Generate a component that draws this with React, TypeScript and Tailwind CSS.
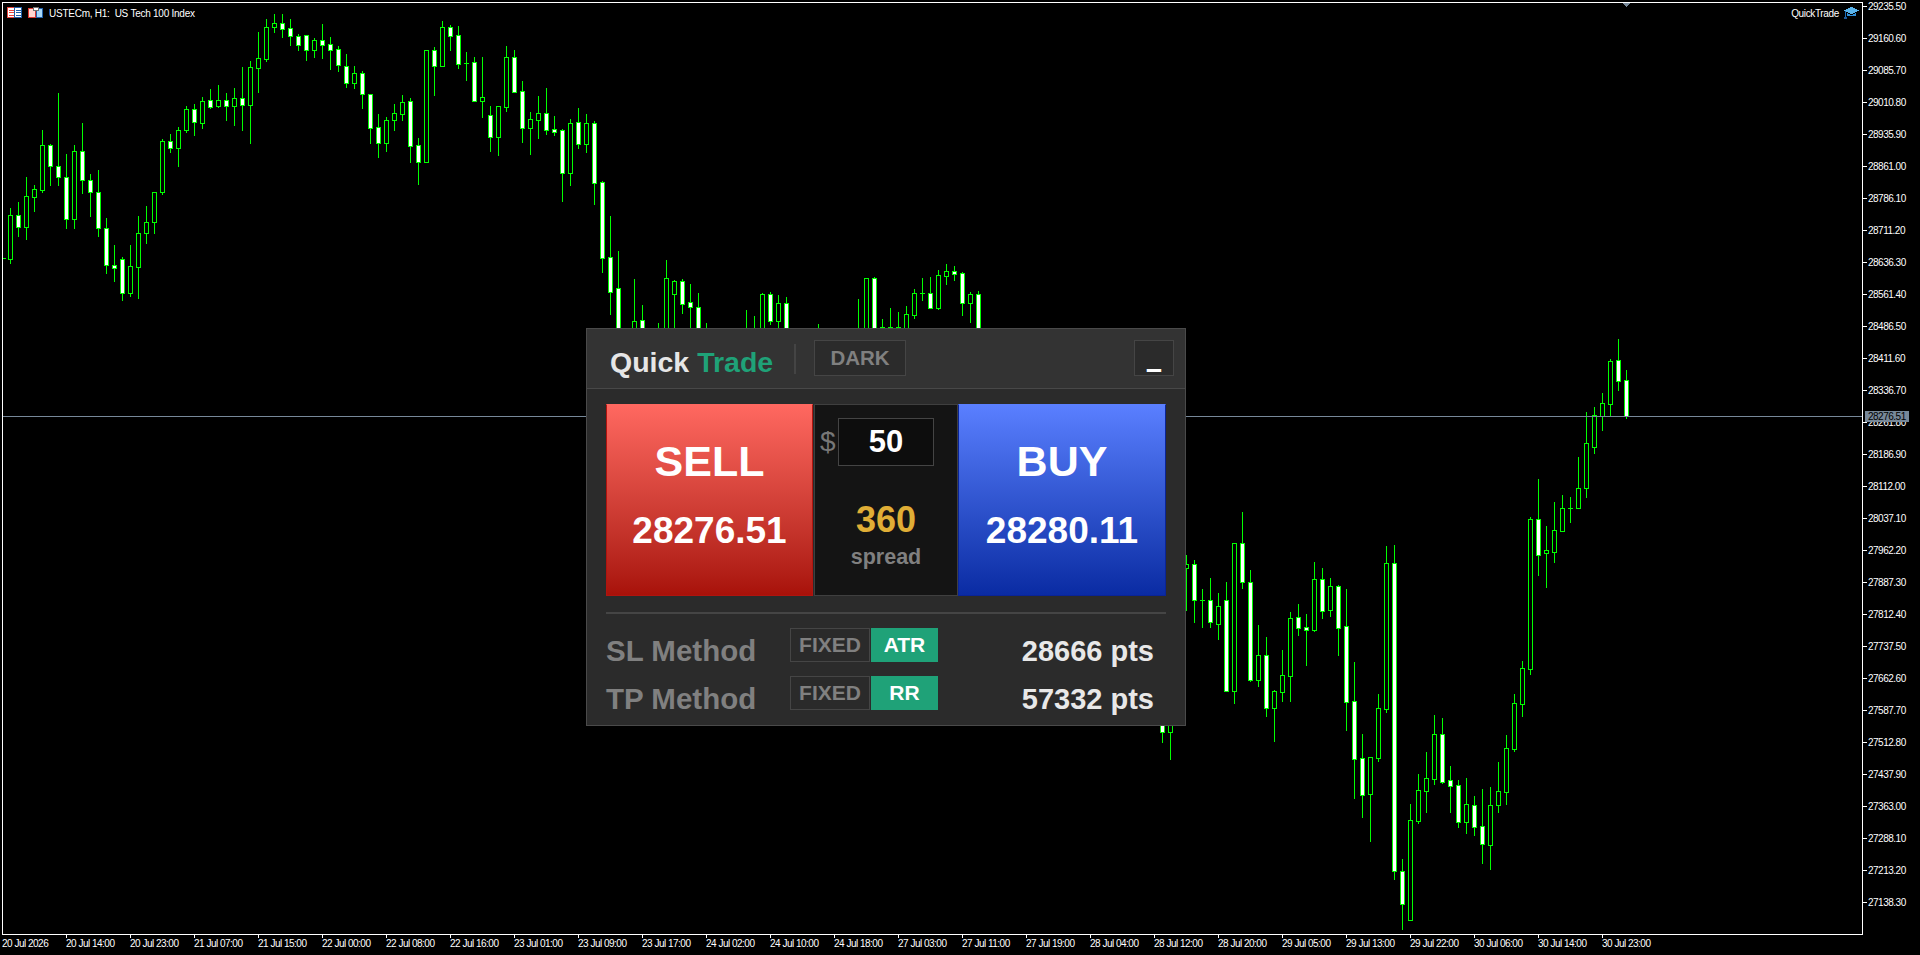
import React from "react";

type Row = number[];
// each group: y offset, zoom divisor, rows. Row: cx, high, bodyTop, bodyBottom, low, filled (1) / hollow (0); wick-only rows have 3 entries
const groups: [number, number, Row[]][] = [
  [0, 3, [
    [10,625,646,778,788,0],[18,606,646,682,707,1],[26,532,589,682,716,0],[34,555,568,590,633,0],[42,390,436,569,575,0],
    [50,433,436,499,555,1],[58,279,499,532,555,1],[66,462,532,658,684,1],[74,435,454,658,684,0],[82,369,454,541,578,1],
    [90,522,541,577,648,1],[98,510,577,685,708,1],[106,655,685,796,819,1],[114,736,796,805,843,1],[122,771,778,880,900,1],
    [130,736,799,880,888,0],[138,648,700,802,894,0],[146,618,667,700,729,0],[154,575,577,667,699,0],[162,418,424,575,581,0],
    [170,403,424,445,456,1],[178,381,391,445,498,0],[186,319,328,391,396,0],[194,312,328,367,405,1],[202,292,304,368,384,0],
    [210,267,301,320,324,1],[218,255,301,319,320,0],[226,279,301,319,360,1],[234,264,295,317,375,0],[242,201,295,314,390,1],
    [250,183,202,314,429,0],[258,96,175,205,276,0],[266,57,82,176,183,0],[274,42,70,82,96,0],[282,42,70,88,111,1],
    [290,57,85,109,135,1],[298,102,109,136,150,1],[306,106,106,151,180,1],[314,114,121,151,171,0],[322,72,121,134,174,1],
    [330,111,133,149,207,1],[338,139,148,196,213,1],[346,163,199,250,261,1],[354,198,220,248,264,0],[362,214,220,283,324,1],
    [370,283,283,385,429,1],[378,343,382,430,471,1],[386,352,361,430,453,0],[394,312,340,361,390,0],
  ]],
  [10, 3, [
    [402,255,277,311,330,0],[410,264,274,407,456,1],[418,384,406,455,522,1],[426,121,121,455,455,0],[434,111,121,167,255,1],
    [442,33,52,167,167,0],[450,45,52,77,120,1],[458,48,76,161,174,1],[466,126,160,160,210,0],[474,141,157,272,272,1],
    [482,141,262,272,321,0],[490,289,316,380,423,1],[498,289,289,380,435,0],[506,108,142,290,303,0],[514,120,142,245,245,1],
    [522,213,244,353,396,1],[530,306,328,353,432,0],[538,258,310,329,384,0],[546,234,310,359,372,1],[554,318,358,365,375,1],
    [562,358,361,488,573,1],[570,327,340,488,525,0],[578,294,337,401,414,1],[586,312,340,401,426,0],[594,333,340,518,582,1],
    [602,514,517,743,786,1],[610,618,742,845,912,1],
  ]],
  [130, 3, [
    [618,363,475,600,600,1],[634,447,574,600,600,0],[642,525,571,600,600,1],[658,579,600],[666,390,445,600,600,0],
    [674,450,454,491,591,0],[682,447,454,521,549,1],[690,462,517,530,600,1],[698,489,532,600,600,1],[706,579,600],
    [746,540,600],[754,558,600],[762,489,493,600,600,0],[770,486,493,572,582,1],[778,495,520,572,600,0],[786,501,520,600,600,1],
    [818,582,600],[858,507,600],[866,445,445,600,600,0],[874,441,445,600,600,1],[882,567,592,592,600,0],[890,534,592,592,600,0],
    [898,546,592,592,600,0],[906,528,553,600,600,0],[914,477,490,554,564,0],[922,444,490,490,510,0],[930,441,490,533,533,1],
    [938,420,436,533,537,0],[946,402,424,437,462,0],[954,408,424,431,450,1],[962,426,430,518,555,1],[970,486,493,518,576,0],
    [978,483,493,600,600,1],
  ]],
  [500, 3, [
    [1186,165,193,205,330,0],[1194,180,193,301,366,1],[1202,267,301,301,381,0],[1210,235,301,367,381,1],[1218,279,319,371,417,0],
    [1226,247,301,574,574,1],[1234,130,130,572,609,0],[1242,36,130,247,264,1],[1250,210,247,539,543,1],[1258,375,466,539,558,0],
    [1266,411,466,625,648,1],[1274,571,574,625,723,0],
  ]],
  [520, 3, [
    [1282,390,466,515,543,0],[1290,277,295,467,543,0],[1298,252,292,323,345,1],[1306,282,322,329,435,1],[1314,126,178,329,333,0],
    [1322,144,178,272,294,1],[1330,174,199,269,288,0],[1338,195,199,323,405,1],[1346,207,319,545,630,1],[1354,426,544,716,834,1],
    [1362,642,715,824,891,1],[1370,711,712,821,963,0],[1378,522,565,713,723,0],[1386,78,130,566,576,0],[1394,75,130,1052,1077,1],
    [1402,1017,1054,1151,1227,1],[1410,852,901,1199,1199,0],[1418,762,811,902,909,0],[1426,696,775,812,876,0],[1434,585,643,776,792,0],
    [1442,594,643,785,789,1],[1450,738,781,797,876,1],[1458,780,796,905,921,1],[1466,774,853,905,939,0],[1474,828,856,920,945,1],
  ]],
  [330, 2.8, [
    [1482,1285,1390,1438,1492,1],[1490,1280,1331,1441,1509,0],[1498,1210,1292,1329,1350,0],[1506,1134,1171,1293,1327,0],
    [1514,1019,1043,1172,1179,0],[1522,927,947,1046,1081,0],[1530,524,530,948,963,0],[1538,417,530,629,686,1],[1546,549,617,625,720,0],
    [1554,482,561,621,650,0],[1562,462,499,562,562,0],[1570,468,497,497,538,0],[1578,356,441,497,497,0],[1586,230,315,441,468,0],
    [1594,216,239,327,344,0],[1602,177,205,241,280,0],[1610,81,88,206,238,0],[1618,25,85,142,168,1],[1626,112,141,242,246,1],
  ]],
  [720, 3, [
    [1162,0,0,36,66,1],[1170,0,0,37,117,0],
  ]],
];

const GREEN = "#00ff00";

function Candles() {
  const out: React.ReactNode[] = [];
  groups.forEach(([off, div, rows], g) => {
    rows.forEach((r, i) => {
      const y = (v: number) => Math.round(off + v / div);
      const cx = r[0];
      if (r.length === 3) {
        out.push(<rect key={`${g}-${i}`} x={cx} y={y(r[1])} width={1} height={y(r[2]) - y(r[1])} fill={GREEN} />);
        return;
      }
      const [, hi, top, bot, lo, f] = r;
      const t = y(top);
      const h = y(bot) - t + 1;
      out.push(
        <g key={`${g}-${i}`}>
          <rect x={cx} y={y(hi)} width={1} height={y(lo) - y(hi) + 1} fill={GREEN} />
          <rect x={cx - 2} y={t} width={5} height={h} fill={GREEN} />
          {h > 2 && <rect x={cx - 1} y={t + 1} width={3} height={h - 2} fill={f ? "#ffffff" : "#000000"} />}
        </g>
      );
    });
  });
  return <>{out}</>;
}

const prices = [
  "29235.50","29160.60","29085.70","29010.80","28935.90","28861.00","28786.10","28711.20","28636.30","28561.40",
  "28486.50","28411.60","28336.70","28261.80","28186.90","28112.00","28037.10","27962.20","27887.30","27812.40",
  "27737.50","27662.60","27587.70","27512.80","27437.90","27363.00","27288.10","27213.20","27138.30",
];
const dates = [
  "20 Jul 2026","20 Jul 14:00","20 Jul 23:00","21 Jul 07:00","21 Jul 15:00","22 Jul 00:00","22 Jul 08:00","22 Jul 16:00",
  "23 Jul 01:00","23 Jul 09:00","23 Jul 17:00","24 Jul 02:00","24 Jul 10:00","24 Jul 18:00","27 Jul 03:00","27 Jul 11:00",
  "27 Jul 19:00","28 Jul 04:00","28 Jul 12:00","28 Jul 20:00","29 Jul 05:00","29 Jul 13:00","29 Jul 22:00","30 Jul 06:00",
  "30 Jul 14:00","30 Jul 23:00",
];

function MethodRow({ label, alt, value }: { label: string; alt: string; value: string }) {
  return (
    <div className="flex items-start h-[34px] mt-[14px]">
      <div className="w-[184px] mt-[6px] leading-[34px] text-[29.5px] font-bold text-[#808080] whitespace-nowrap">{label}</div>
      <div className="w-[80px] h-[34px] flex items-center justify-center bg-[#2a2a2a] border border-[#454545] text-[21px] font-bold text-[#808080]">FIXED</div>
      <div className="ml-px w-[67px] h-[34px] flex items-center justify-center bg-[#1fa278] text-[21px] font-bold text-white">{alt}</div>
      <div className="w-[216px] mt-[6px] leading-[34px] text-[29px] font-bold text-[#e8e8e8] text-right whitespace-nowrap">{value}</div>
    </div>
  );
}

function TradeButton({ side, price, cls }: { side: string; price: string; cls: string }) {
  return (
    <div className={`h-[192px] flex flex-col items-center border pt-[32px] ${cls}`}>
      <div className="text-[43px] leading-[48px] font-bold text-white">{side}</div>
      <div className="mt-[26px] text-[37px] leading-[40px] font-bold text-white">{price}</div>
    </div>
  );
}

function Panel() {
  return (
    <div className="absolute left-[583px] top-[325px] w-[600px] h-[398px] bg-[#2b2b2b] border border-[#4a4a4a] tracking-normal font-['Liberation_Sans',Arial,sans-serif]">
      <div className="flex items-start h-[59px] box-content border-b border-[#484848] bg-[#333333] pl-[23px] pt-0">
        <div className="mt-[17px] w-[165px] text-[28.5px] leading-[32px] font-bold whitespace-nowrap text-[#e6e6e6]">
          Quick <span className="text-[#1fa278]">Trade</span>
        </div>
        <div className="ml-[19px] mt-[15px] w-[2px] h-[30px] bg-[#444444]" />
        <div className="ml-[18px] mt-[11px] w-[92px] h-[36px] flex items-center justify-center bg-[#2b2b2b] border border-[#454545] text-[20.5px] font-bold text-[#808080]">DARK</div>
        <div className="ml-[228px] mt-[11px] w-[40px] h-[36px] flex items-end justify-center bg-[#2b2b2b] border border-[#454545] text-[25px] leading-[28px] pb-[1px] font-bold text-white [text-shadow:0_-1px_0_#ffffff,0_-2px_0_#ffffff]">_</div>
      </div>
      <div className="pl-[19px] pt-[15px]">
        <div className="flex items-start">
          <TradeButton side="SELL" price="28276.51" cls="w-[207px] bg-linear-to-b from-[#ff6860] to-[#a81109] border-[#b0140f] border-t-[#ff6860]" />
          <div className="ml-px w-[144px] h-[192px] flex flex-col items-center bg-[#141414] border border-[#3f3f3f]">
            <div className="self-start flex items-center pl-[5px] mt-[13px]">
              <span className="w-[18px] text-[28px] leading-[48px] text-[#777777]">$</span>
              <div className="w-[96px] h-[48px] flex items-center justify-center bg-[#0d0d0d] border border-[#444444] text-[31px] font-bold text-white">50</div>
            </div>
            <div className="mt-[34px] text-[36px] leading-[40px] font-bold text-[#e0ae36]">360</div>
            <div className="mt-[4px] text-[21.5px] leading-[26px] font-bold text-[#808080]">spread</div>
          </div>
          <TradeButton side="BUY" price="28280.11" cls="w-[208px] bg-linear-to-b from-[#5a7fff] to-[#0a2ba3] border-[#0a2496] border-t-[#5a7fff]" />
        </div>
        <div className="mt-[16px] w-[560px] h-[2px] bg-[#454545]" />
        <MethodRow label="SL Method" alt="ATR" value="28666 pts" />
        <MethodRow label="TP Method" alt="RR" value="57332 pts" />
      </div>
    </div>
  );
}

export default function App() {
  return (
    <div className="w-[1920px] h-[955px] bg-black overflow-hidden flex flex-col pl-[2px] pt-[2px] text-white text-[10px] tracking-[-0.5px] font-['Liberation_Sans',sans-serif]">
      <div className="flex items-start h-[933px] shrink-0">
        <div className="relative w-[1861px] h-[933px] shrink-0 border border-white">
          <svg className="block w-full h-full" viewBox="3 3 1859 931" shapeRendering="crispEdges">
            <rect x="3" y="258" width="3" height="1" fill={GREEN} />
            <Candles />
            <rect x="3" y="416" width="1859" height="1" fill="#778899" />
            <polygon points="1622,3 1630,3 1626,7" fill="#778899" />
          </svg>

          <div className="absolute left-[4px] top-[4px] flex items-center h-[12px] whitespace-nowrap">
            <svg width="16" height="12" viewBox="0 0 16 12" shapeRendering="crispEdges">
              <rect x="0.5" y="0.5" width="7" height="10" fill="#ffffff" stroke="#e8453c" />
              <rect x="7.5" y="0.5" width="7" height="10" fill="#ffffff" stroke="#1f5fa8" />
              <path d="M2 3h5M2 5.5h5M2 8h5" stroke="#e8453c" />
              <path d="M9 3h5M9 5.5h5M9 8h5" stroke="#1f5fa8" />
            </svg>
            <svg className="ml-[5px]" width="16" height="12" viewBox="0 0 16 12" shapeRendering="crispEdges">
              <path d="M0.5 1.5h5v2h2v7h-7z" fill="#ffd6d0" stroke="#d9362e" />
              <path d="M8.5 3.5h2v-2h4v9h-6z" fill="#a8d8f8" stroke="#1f5fa8" />
              <rect x="5.5" y="0.5" width="5" height="3" fill="#ffffff" stroke="#6e6e6e" />
            </svg>
            <span className="ml-[5px] pt-[2px] leading-[12px] tracking-[-0.25px]">USTECm, H1:&nbsp;&nbsp;US Tech 100 Index</span>
          </div>

          <div className="absolute right-[3px] top-[4px] flex items-center h-[12px]">
            <span className="pt-[2px] leading-[12px] tracking-[-0.35px]">QuickTrade</span>
            <svg className="ml-[5px]" width="15" height="12" viewBox="0 0 15 12" shapeRendering="crispEdges">
              <path d="M7.5 0L15 3.5L7.5 7L0 3.5z" fill="#5ab4ec" />
              <path d="M3 6v3h9V6L7.5 8z" fill="#2f8fd8" />
              <rect x="1" y="4" width="1" height="6" fill="#1f6fb8" />
              <rect x="0" y="10" width="3" height="2" fill="#1a5a9c" />
            </svg>
          </div>

          <Panel />
        </div>

        <div className="relative -mt-[12px] flex flex-col shrink-0">
          {prices.map((p) => (
            <div key={p} className="flex items-center h-[32px]">
              <div className="w-[4px] h-px bg-white" />
              <span className="ml-px pt-[2px] leading-[12px]">{p}</span>
            </div>
          ))}
          <div className="absolute left-[2px] top-[421px] w-[44px] h-[11px] pl-[3px] bg-[#778899] text-black leading-[11px]">28276.51</div>
        </div>
      </div>

      <div className="flex">
        {dates.map((d, i) => (
          <div key={d} className="w-[64px] shrink-0 flex flex-col items-start">
            <div className={`w-px h-[3px] ${i === 0 ? "bg-black" : "bg-white"}`} />
            <span className="leading-[12px] whitespace-nowrap">{d}</span>
          </div>
        ))}
      </div>
    </div>
  );
}
